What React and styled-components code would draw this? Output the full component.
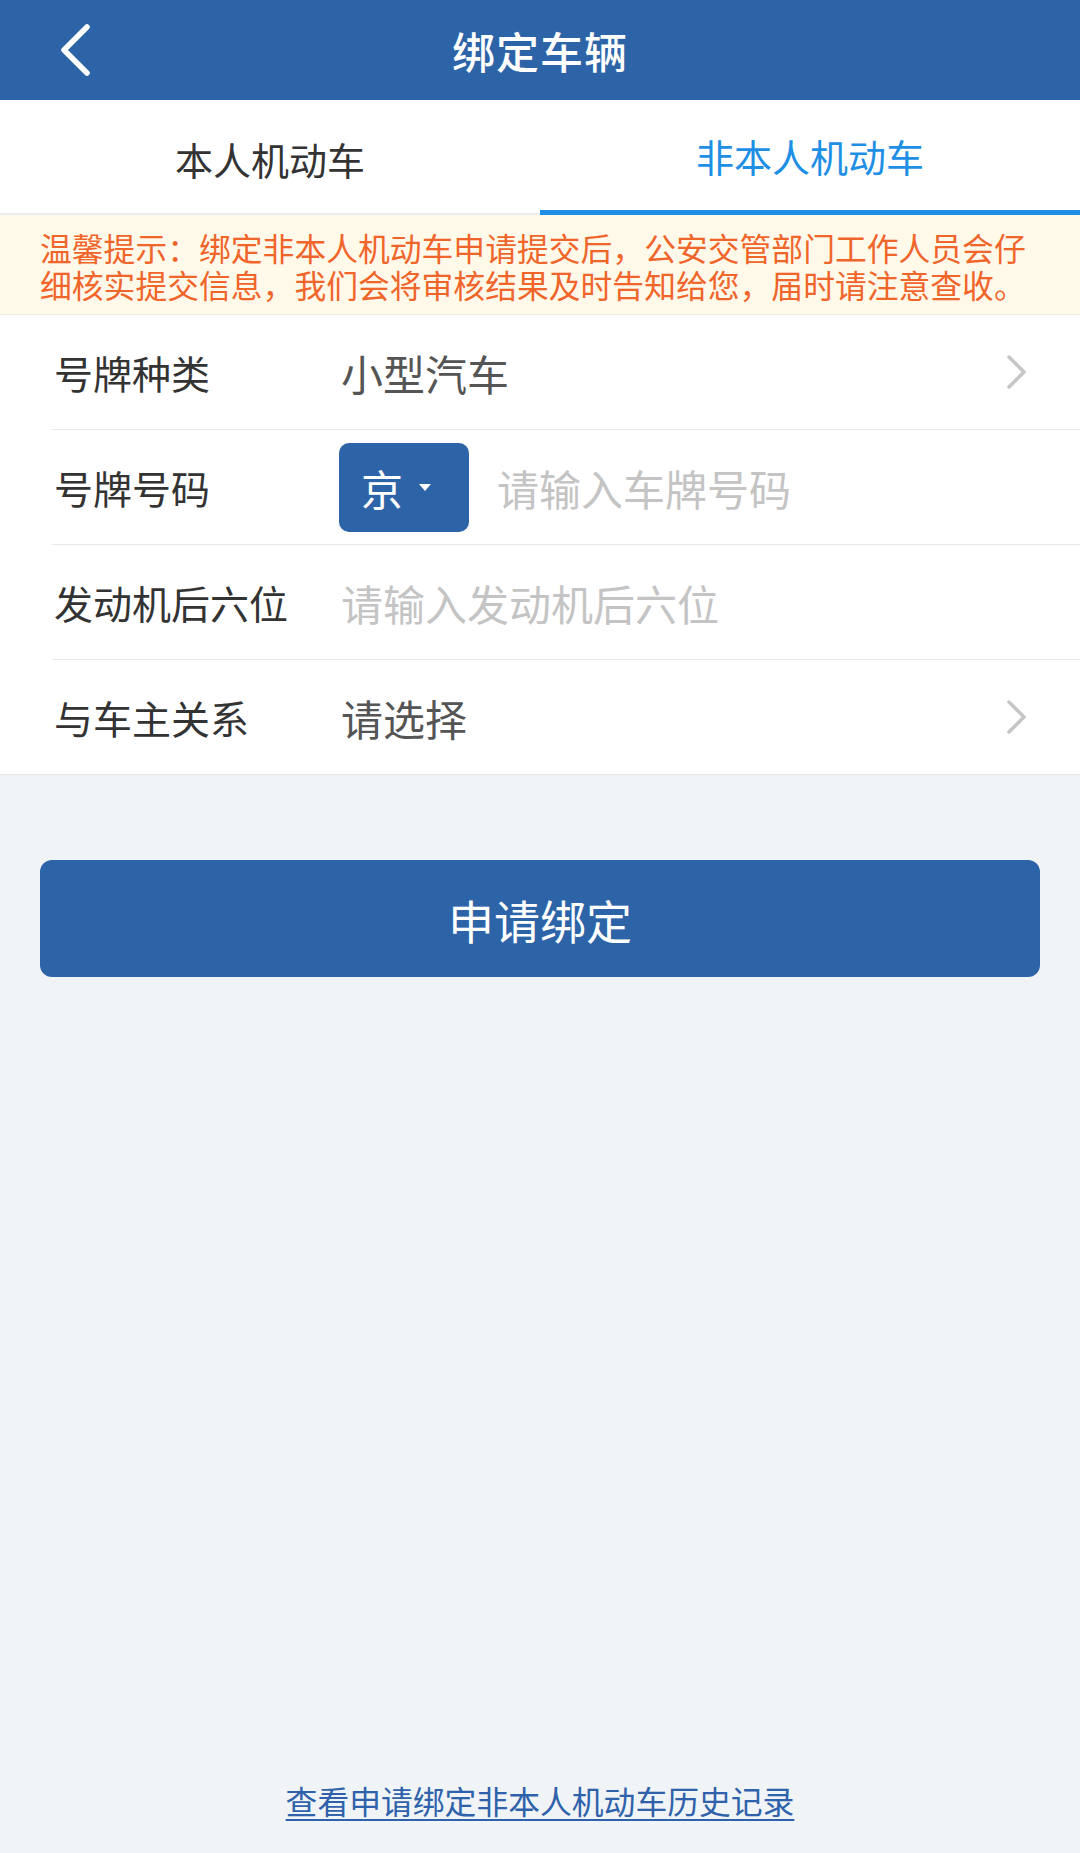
import React from "react";
import styled, { createGlobalStyle } from "styled-components";

const Global = createGlobalStyle`
  html, body { margin: 0; padding: 0; background: #f0f4f7; }
  body { font-family: "Noto Sans CJK SC", "Noto Sans", sans-serif; }
  #root { min-height: 100vh; }
  * { box-sizing: border-box; }
`;

const Page = styled.div`
  min-height: 100vh;
  display: flex;
  flex-direction: column;
  background: #f0f4f7;
`;

const Header = styled.header`
  height: 100px;
  background: #2d64a8;
  display: grid;
  grid-template-columns: 1fr auto 1fr;
  align-items: center;
`;

const BackButton = styled.button`
  justify-self: start;
  margin-left: 58px;
  padding: 0;
  border: 0;
  background: none;
  display: flex;
  align-items: center;
  height: 56px;
`;

const Title = styled.h1`
  margin: 0;
  color: #fff;
  font-size: 43px;
  font-weight: 500;
  line-height: 1;
  letter-spacing: 1px;
`;

const TabBar = styled.nav`
  display: flex;
  background: #fff;
  height: 115px;
`;

const Tab = styled.div`
  flex: 1;
  display: flex;
  align-items: center;
  justify-content: center;
  font-size: 38px;
  color: ${(p) => (p.$active ? "#1e8fe4" : "#333")};
  border-bottom: ${(p) => (p.$active ? "5px solid #1e8fe4" : "2px solid #ececec")};
  padding-top: ${(p) => (p.$active ? "0" : "3px")};
`;

const Hint = styled.div`
  background: #fff9ea;
  color: #f0652a;
  font-size: 31.8px;
  line-height: 37px;
  padding: 14px 10px 11px 40px;
  white-space: nowrap;
  border-bottom: 1px solid #f1ece2;
`;

const HintLine = styled.span`
  display: block;
`;

const List = styled.div`
  background: #fff;
  padding-left: 52px;
  border-bottom: 1px solid #e6e6e6;
`;

const Row = styled.div`
  height: ${(p) => (p.$last ? "114px" : "115px")};
  display: flex;
  align-items: center;
  padding: 0 53px 0 2px;
  border-bottom: ${(p) => (p.$last ? "none" : "1px solid #e8e8e8")};
`;

const Label = styled.div`
  width: 287px;
  flex-shrink: 0;
  font-size: 39px;
  color: #333;
`;

const Value = styled.div`
  flex: 1;
  font-size: 42px;
  color: ${(p) => (p.$placeholder ? "#c4c4c4" : "#555")};
`;

const PlateButton = styled.div`
  width: 130px;
  height: 89px;
  margin-left: -2px;
  margin-right: 28px;
  padding-left: 22px;
  border-radius: 10px;
  background: #2d64a8;
  color: #fff;
  display: flex;
  align-items: center;
  gap: 16px;
  font-size: 42px;
  flex-shrink: 0;
`;

const Caret = styled.span`
  width: 0;
  height: 0;
  border-left: 6px solid transparent;
  border-right: 6px solid transparent;
  border-top: 7px solid #fff;
`;

const SubmitButton = styled.button`
  margin: 85px 40px 0;
  height: 117px;
  border: 0;
  border-radius: 12px;
  background: #2d64a8;
  color: #fff;
  font-family: inherit;
  font-size: 46px;
  letter-spacing: 0;
`;

const Footer = styled.div`
  margin-top: auto;
  padding-bottom: 31px;
  text-align: center;
`;

const HistoryLink = styled.a`
  font-size: 31.8px;
  line-height: 44px;
  color: #2f62aa;
  text-decoration: underline;
  text-underline-offset: 5px;
  text-decoration-thickness: 2px;
`;

const Chevron = () => (
  <svg width="20" height="34" viewBox="0 0 20 34" fill="none">
    <polyline points="2,2 17,17 2,32" stroke="#c6c6c6" strokeWidth="3.5" strokeLinecap="round" strokeLinejoin="round" />
  </svg>
);

const BackIcon = () => (
  <svg width="34" height="52" viewBox="0 0 34 52" fill="none">
    <polyline points="29,3 6,26 29,49" stroke="#fff" strokeWidth="5.5" strokeLinecap="round" strokeLinejoin="round" />
  </svg>
);

export default function App() {
  return (
    <Page>
      <Global />
      <Header>
        <BackButton aria-label="返回">
          <BackIcon />
        </BackButton>
        <Title>绑定车辆</Title>
        <span />
      </Header>
      <TabBar>
        <Tab>本人机动车</Tab>
        <Tab $active>非本人机动车</Tab>
      </TabBar>
      <Hint>
        <HintLine>温馨提示：绑定非本人机动车申请提交后，公安交管部门工作人员会仔</HintLine>
        <HintLine>细核实提交信息，我们会将审核结果及时告知给您，届时请注意查收。</HintLine>
      </Hint>
      <List>
        <Row>
          <Label>号牌种类</Label>
          <Value>小型汽车</Value>
          <Chevron />
        </Row>
        <Row>
          <Label>号牌号码</Label>
          <PlateButton>
            京<Caret />
          </PlateButton>
          <Value $placeholder>请输入车牌号码</Value>
        </Row>
        <Row>
          <Label>发动机后六位</Label>
          <Value $placeholder>请输入发动机后六位</Value>
        </Row>
        <Row $last>
          <Label>与车主关系</Label>
          <Value>请选择</Value>
          <Chevron />
        </Row>
      </List>
      <SubmitButton>申请绑定</SubmitButton>
      <Footer>
        <HistoryLink href="#">查看申请绑定非本人机动车历史记录</HistoryLink>
      </Footer>
    </Page>
  );
}
